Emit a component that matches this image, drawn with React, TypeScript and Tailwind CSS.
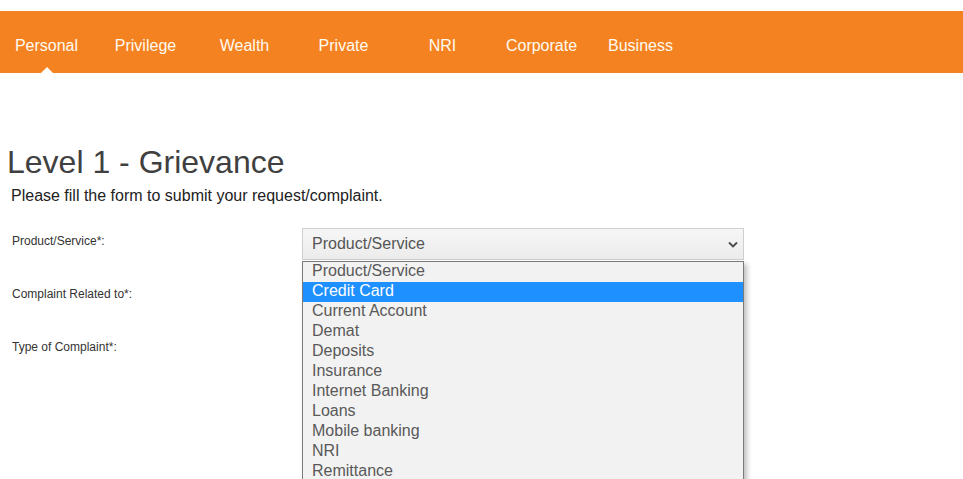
import React from "react";

const navItems = ["Personal", "Privilege", "Wealth", "Private", "NRI", "Corporate", "Business"];
const options = [
  "Product/Service",
  "Credit Card",
  "Current Account",
  "Demat",
  "Deposits",
  "Insurance",
  "Internet Banking",
  "Loans",
  "Mobile banking",
  "NRI",
  "Remittance",
];

export default function App() {
  return (
    <div className="min-h-screen bg-white" style={{ fontFamily: '"Liberation Sans", Arial, sans-serif' }}>
      <div className="h-[11px]" />
      <nav className="flex h-[62px] gap-[6px] bg-[#f58220]">
        {navItems.map((item, i) => (
          <div key={item} className="relative flex h-full w-[93px] shrink-0 items-center justify-center pt-[8px] text-[16px] text-[#fffaf0]">
            {item}
            {i === 0 && (
              <span className="absolute bottom-0 left-1/2 h-0 w-0 -translate-x-1/2 border-b-[6px] border-l-[6px] border-r-[6px] border-b-white border-l-transparent border-r-transparent" />
            )}
          </div>
        ))}
      </nav>

      <div className="pl-[7px] pt-[71px]">
        <h1 className="text-[32px] leading-[36px] text-[#404040]">Level 1 - Grievance</h1>
      </div>
      <p className="mt-[6px] pl-[11px] text-[16px] leading-[20px] text-[#222]">
        Please fill the form to submit your request/complaint.
      </p>

      <div className="mt-[22px] flex flex-col pl-[12px]">
        <div className="flex h-[53px] items-start">
          <label className="w-[290px] shrink-0 pt-[5px] text-[12px] leading-[16px] text-[#333]">Product/Service*:</label>
          <div className="relative w-[442px]">
            <div className="flex h-[32px] items-center justify-between border border-[#cfcfcf] bg-gradient-to-b from-[#f6f6f6] to-[#ececec] pl-[9px] pr-[4px] text-[16px] text-[#555]">
              <span>Product/Service</span>
              <svg width="12" height="12" viewBox="0 0 12 12" fill="none">
                <path d="M2 4.5 L6 8.5 L10 4.5" stroke="#4a4a4a" strokeWidth="1.8" />
              </svg>
            </div>
            <div className="absolute left-0 top-[33px] z-10 w-[442px] overflow-hidden border border-[#7a7a7a] bg-[#f2f2f2] shadow-[3px_3px_5px_rgba(0,0,0,0.25)]">
              {options.map((o, i) => (
                <div
                  key={o}
                  className={
                    i === 1
                      ? "h-[20px] bg-[#1e90ff] pl-[9px] text-[16px] leading-[18px] text-white"
                      : "h-[20px] pl-[9px] text-[16px] leading-[18px] text-[#595959]"
                  }
                >
                  {o}
                </div>
              ))}
            </div>
          </div>
        </div>
        <div className="flex h-[53px] items-start">
          <label className="w-[290px] shrink-0 pt-[5px] text-[12px] leading-[16px] text-[#333]">Complaint Related to*:</label>
        </div>
        <div className="flex h-[53px] items-start">
          <label className="w-[290px] shrink-0 pt-[5px] text-[12px] leading-[16px] text-[#333]">Type of Complaint*:</label>
        </div>
      </div>
    </div>
  );
}
